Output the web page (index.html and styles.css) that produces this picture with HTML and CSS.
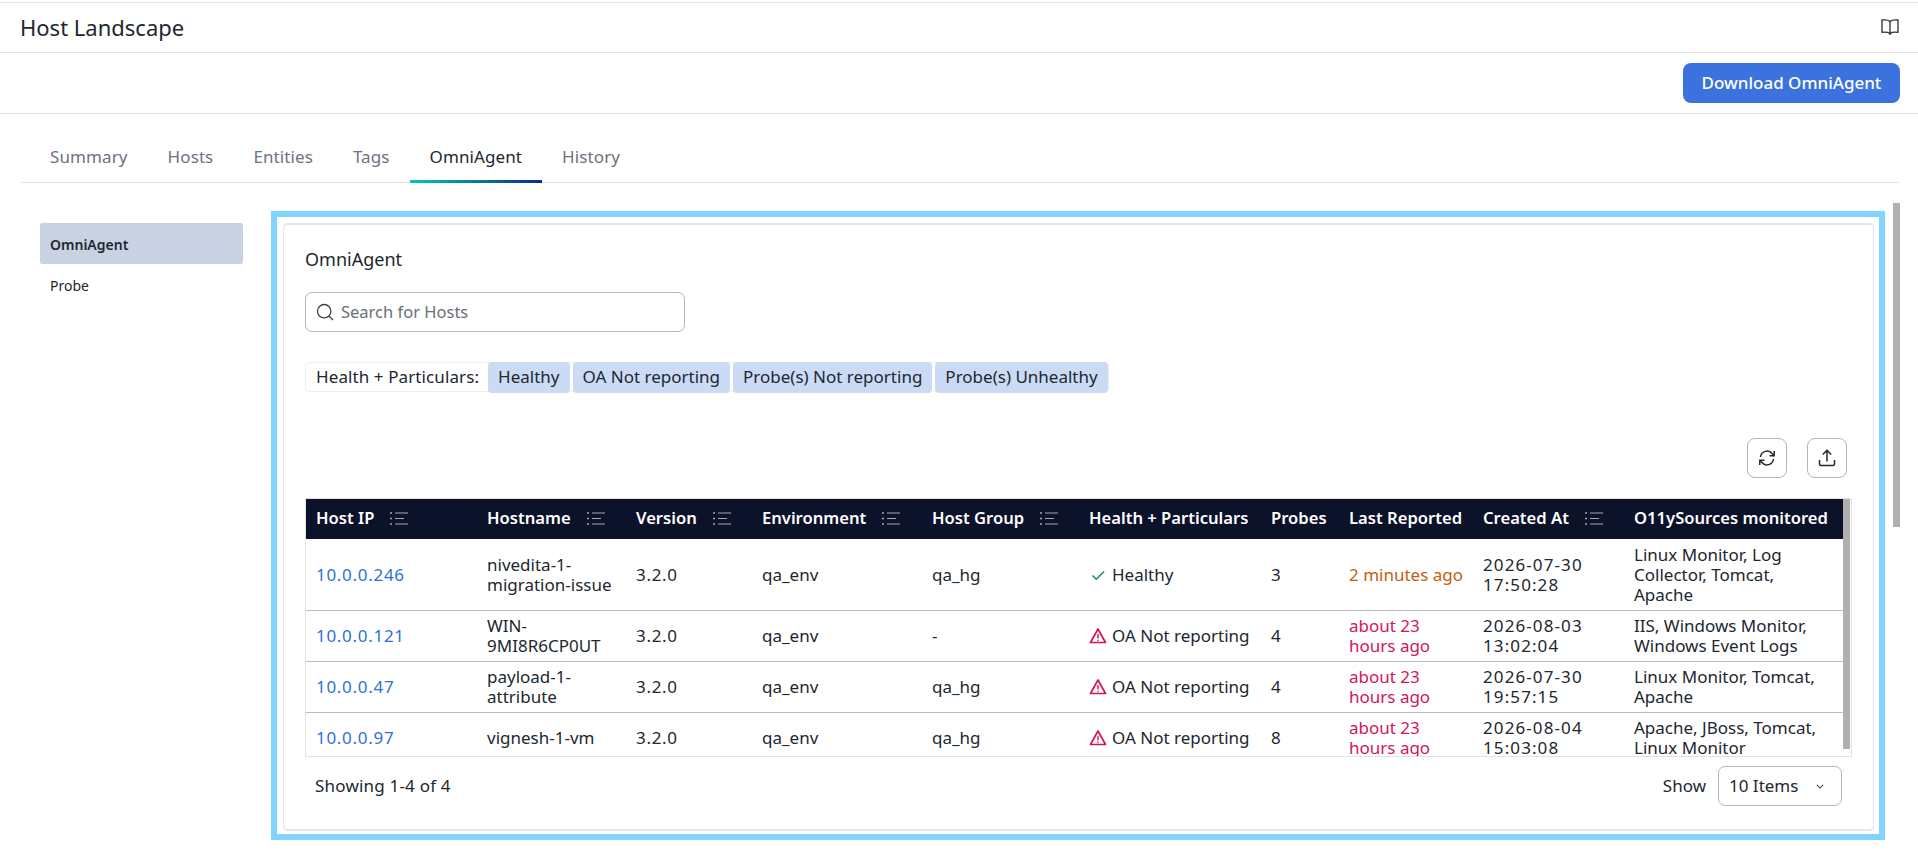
FILE: index.html
```html
<!DOCTYPE html>
<html lang="en">
<head>
    <meta charset="UTF-8">
    <title>Host Landscape</title>
    <link rel="stylesheet" href="styles.css">
</head>
<body>
    <svg class="sprite" width="0" height="0">
        <symbol id="sort" viewBox="0 0 18 13">
            <path d="M0 1h2M0 6.500h2M0 12h2" stroke="currentColor" stroke-width="1.400"/>
            <path d="M5 1h13M5 6.500h9M5 12h13" stroke="currentColor" stroke-width="1.200"/>
        </symbol>
        <symbol id="warn" viewBox="0 0 18 18">
            <path d="M9 2 16.500 15.500h-15z" fill="none" stroke="currentColor" stroke-width="1.700" stroke-linejoin="round"/>
            <path d="M9 7v4.500M9 12.700v1.300" stroke="currentColor" stroke-width="1.400"/>
        </symbol>
    </svg>

    <header class="page-header">
        <h1>Host Landscape</h1>
        <svg class="book-icon" viewBox="0 0 18 18" width="18" height="18" fill="none" stroke="#2b2f36" stroke-width="1.300" stroke-linejoin="round">
            <path d="M9 3.500C7.500 2 4 1.700 1 2v12.300c3-.3 6.500 0 8 1.200 1.500-1.200 5-1.500 8-1.200V2c-3-.3-6.500 0-8 1.500z"/>
            <path d="M9 3.500v13.500"/>
        </svg>
    </header>

    <div class="action-bar">
        <button class="btn-primary">Download OmniAgent</button>
    </div>

    <nav class="tabs">
        <a class="tab">Summary</a>
        <a class="tab">Hosts</a>
        <a class="tab">Entities</a>
        <a class="tab">Tags</a>
        <a class="tab active">OmniAgent</a>
        <a class="tab">History</a>
    </nav>

    <main class="content">
        <aside class="side-nav">
            <a class="side-item selected">OmniAgent</a>
            <a class="side-item">Probe</a>
        </aside>

        <section class="highlight">
            <div class="card">
                <h2 class="card-title">OmniAgent</h2>

                <div class="search">
                    <svg viewBox="0 0 18 18" width="18" height="18" fill="none" stroke="#3c4149" stroke-width="1.300">
                        <circle cx="8.200" cy="8.200" r="6.700"/>
                        <path d="M13 13l4 4"/>
                    </svg>
                    <span>Search for Hosts</span>
                </div>

                <div class="filters">
                    <span class="filter-label">Health + Particulars:</span>
                    <span class="chip">Healthy</span>
                    <span class="chip">OA Not reporting</span>
                    <span class="chip">Probe(s) Not reporting</span>
                    <span class="chip">Probe(s) Unhealthy</span>
                </div>

                <div class="toolbar">
                    <button class="icon-btn">
                        <svg viewBox="0 0 18 18" width="18" height="18" fill="none" stroke="#23272e" stroke-width="1.500">
                            <path d="M2.500 8A6.600 6.600 0 0 1 14.300 4.700L16 6.500"/>
                            <path d="M16.200 2v4.700h-4.700"/>
                            <path d="M15.500 10A6.600 6.600 0 0 1 3.700 13.300L2 11.500"/>
                            <path d="M1.800 16v-4.700h4.700"/>
                        </svg>
                    </button>
                    <button class="icon-btn">
                        <svg viewBox="0 0 18 18" width="18" height="18" fill="none" stroke="#23272e" stroke-width="1.500">
                            <path d="M9 12.500V1.500M4.800 5.500 9 1.300l4.200 4.200"/>
                            <path d="M1.500 11v4a1.500 1.500 0 0 0 1.500 1.500h12a1.500 1.500 0 0 0 1.500-1.500v-4"/>
                        </svg>
                    </button>
                </div>

                <div class="table-wrap">
                    <table class="hosts">
                        <colgroup>
                            <col class="c-ip"><col class="c-name"><col class="c-ver"><col class="c-env"><col class="c-group">
                            <col class="c-health"><col class="c-probes"><col class="c-last"><col class="c-created"><col class="c-src">
                        </colgroup>
                        <thead>
                            <tr>
                                <th><div class="th-in"><span>Host IP</span><svg class="sort"><use href="#sort"/></svg></div></th>
                                <th><div class="th-in"><span>Hostname</span><svg class="sort"><use href="#sort"/></svg></div></th>
                                <th><div class="th-in"><span>Version</span><svg class="sort"><use href="#sort"/></svg></div></th>
                                <th><div class="th-in"><span>Environment</span><svg class="sort"><use href="#sort"/></svg></div></th>
                                <th><div class="th-in"><span>Host Group</span><svg class="sort"><use href="#sort"/></svg></div></th>
                                <th>Health + Particulars</th>
                                <th>Probes</th>
                                <th>Last Reported</th>
                                <th><div class="th-in"><span>Created At</span><svg class="sort"><use href="#sort"/></svg></div></th>
                                <th>O11ySources monitored</th>
                            </tr>
                        </thead>
                        <tbody>
                            <tr>
                                <td class="num"><a class="ip">10.0.0.246</a></td>
                                <td>nivedita-1-<br>migration-issue</td>
                                <td class="num">3.2.0</td>
                                <td>qa_env</td>
                                <td>qa_hg</td>
                                <td><span class="health"><svg class="ok" viewBox="0 0 14 14" width="14" height="14" fill="none" stroke="currentColor" stroke-width="1.500"><path d="M1.500 7.500 5.300 11.300 13 3.500"/></svg>Healthy</span></td>
                                <td class="num">3</td>
                                <td class="recent">2 minutes ago</td>
                                <td class="stamp">2026-07-30<br>17:50:28</td>
                                <td>Linux Monitor, Log<br>Collector, Tomcat,<br>Apache</td>
                            </tr>
                            <tr>
                                <td class="num"><a class="ip">10.0.0.121</a></td>
                                <td>WIN-<br>9MI8R6CP0UT</td>
                                <td class="num">3.2.0</td>
                                <td>qa_env</td>
                                <td>-</td>
                                <td><span class="health"><svg class="bad"><use href="#warn"/></svg>OA Not reporting</span></td>
                                <td class="num">4</td>
                                <td class="stale">about 23<br>hours ago</td>
                                <td class="stamp">2026-08-03<br>13:02:04</td>
                                <td>IIS, Windows Monitor,<br>Windows Event Logs</td>
                            </tr>
                            <tr>
                                <td class="num"><a class="ip">10.0.0.47</a></td>
                                <td>payload-1-<br>attribute</td>
                                <td class="num">3.2.0</td>
                                <td>qa_env</td>
                                <td>qa_hg</td>
                                <td><span class="health"><svg class="bad"><use href="#warn"/></svg>OA Not reporting</span></td>
                                <td class="num">4</td>
                                <td class="stale">about 23<br>hours ago</td>
                                <td class="stamp">2026-07-30<br>19:57:15</td>
                                <td>Linux Monitor, Tomcat,<br>Apache</td>
                            </tr>
                            <tr>
                                <td class="num"><a class="ip">10.0.0.97</a></td>
                                <td>vignesh-1-vm</td>
                                <td class="num">3.2.0</td>
                                <td>qa_env</td>
                                <td>qa_hg</td>
                                <td><span class="health"><svg class="bad"><use href="#warn"/></svg>OA Not reporting</span></td>
                                <td class="num">8</td>
                                <td class="stale">about 23<br>hours ago</td>
                                <td class="stamp">2026-08-04<br>15:03:08</td>
                                <td>Apache, JBoss, Tomcat,<br>Linux Monitor</td>
                            </tr>
                        </tbody>
                    </table>
                    <div class="table-scroll"></div>
                </div>

                <div class="table-footer">
                    <span class="showing">Showing 1-4 of 4</span>
                    <div class="page-size">
                        <span>Show</span>
                        <div class="select">
                            <span>10 Items</span>
                            <svg viewBox="0 0 10 6" width="8" height="5" fill="none" stroke="#3c4149" stroke-width="1.300"><path d="M1 1l4 4 4-4"/></svg>
                        </div>
                    </div>
                </div>
            </div>
        </section>

        <div class="page-scroll"></div>
    </main>
</body>
</html>
```

FILE: styles.css
```css
* {
    box-sizing: border-box;
}
body {
    margin: 0;
    height: 865px;
    overflow: hidden;
    background-color: #fff;
    color: #21272f;
    font-family: "Noto Sans", Arial, sans-serif;
    font-size: 17px;
    line-height: 20px;
}
.sprite {
    position: absolute;
}
.page-header {
    margin-top: 2px;
    height: 51px;
    border-top: 1px solid #e5e5e5;
    border-bottom: 1px solid #e5e5e5;
    display: flex;
    align-items: center;
    justify-content: space-between;
    padding: 0 19px 1px 20px;
}
h1 {
    margin: 0;
    font-size: 22px;
    font-weight: 400;
}
.action-bar {
    height: 61px;
    border-bottom: 1px solid #e5e5e5;
    display: flex;
    align-items: center;
    justify-content: flex-end;
    padding: 0 18px 1px 0;
}
.btn-primary {
    width: 217px;
    height: 40px;
    border: 0;
    border-radius: 8px;
    background-color: #3b72de;
    color: #fff;
    font: 500 17px "Noto Sans", Arial, sans-serif;
}
.tabs {
    margin: 0 18px 0 20px;
    height: 69px;
    border-bottom: 1px solid #e5e5e5;
    display: flex;
    align-items: flex-end;
    padding-left: 10px;
}
.tab {
    height: 44px;
    padding: 8px 20px 0;
    color: #6b7280;
    letter-spacing: .1px;
    margin-bottom: -1px;
    border-bottom: 3px solid transparent;
}
.tab.active {
    color: #21272f;
    border-image: linear-gradient(90deg, #00c9b7, #0a2a8c) 1;
}
.content {
    display: flex;
    align-items: flex-start;
    padding: 20px 18px 0 40px;
    margin-top: 8px;
    gap: 28px;
}
.side-nav {
    width: 203px;
    margin-top: 12px;
    flex: none;
}
.side-item {
    display: block;
    height: 41px;
    padding: 0 10px;
    line-height: 43px;
    font-size: 14px;
}
.selected {
    background-color: #c9d2e2;
    border-radius: 2px;
    font-weight: 600;
}
.highlight {
    flex: 1;
    height: 629px;
    border: 6px solid #80d4ff;
    padding: 6px 5px 3px 6px;
}
.page-scroll {
    flex: none;
    width: 7px;
    height: 324px;
    margin: -8px 0 0 -20px;
    background-color: #b0b0b0;
}
.card {
    height: 100%;
    border: 1px solid #e6e6e6;
    border-width: 2px 1px;
    border-radius: 5px;
    padding: 22px 21px 0;
}
.card-title {
    margin: 0;
    font-size: 18px;
    font-weight: 400;
    line-height: 24px;
}
.search {
    margin-top: 21px;
    width: 380px;
    height: 40px;
    border: 1px solid #b5b5b5;
    border-radius: 7px;
    display: flex;
    align-items: center;
    gap: 7px;
    padding: 0 10px;
    color: #6b6f76;
    font-size: 16.500px;
}
.filters {
    margin-top: 30px;
    width: fit-content;
    height: 30px;
    border: 1px solid #eee;
    border-radius: 4px;
    display: flex;
    align-items: center;
    gap: 3px;
    padding-left: 10px;
}
.filter-label {
    margin-right: 6px;
    letter-spacing: .1px;
}
.chip {
    height: 31px;
    line-height: 30px;
    padding: 0 10px;
    background-color: #ccdbf5;
    border-radius: 4px;
}
.toolbar {
    margin-top: 46px;
    display: flex;
    justify-content: flex-end;
    gap: 20px;
    padding-right: 5px;
}
.icon-btn {
    width: 40px;
    height: 40px;
    padding: 0;
    background-color: #fff;
    border: 1px solid #b5b5b5;
    border-radius: 8px;
    display: flex;
    align-items: center;
    justify-content: center;
}
.table-wrap {
    margin-top: 20px;
    height: 259px;
    border: 1px solid #e2e2e2;
    display: flex;
    overflow: hidden;
}
.hosts {
    width: 1537px;
    flex: none;
    table-layout: fixed;
    border-collapse: collapse;
}
.c-ip { width: 171px; }
.c-name { width: 149px; }
.c-ver { width: 126px; }
.c-env { width: 170px; }
.c-group { width: 157px; }
.c-health { width: 182px; }
.c-probes { width: 78px; }
.c-last { width: 134px; }
.c-created { width: 151px; }
.c-src { width: 219px; }
.hosts th {
    height: 40px;
    padding: 0 10px 2px;
    background-color: #0b1229;
    color: #fff;
    text-align: left;
    font-weight: 600;
    white-space: nowrap;
    font-size: 16.600px;
}
.th-in {
    display: flex;
    align-items: center;
    gap: 16px;
}
.sort {
    width: 18px;
    height: 13px;
    color: #a3a7b0;
}
.hosts td {
    padding: 5px 10px;
    border-bottom: 1px solid #bdbdbd;
    vertical-align: middle;
}
.hosts tbody tr:first-child td {
    padding: 5.500px 10px;
}
.num {
    letter-spacing: .7px;
}
.stamp {
    letter-spacing: 1.100px;
}
.ip {
    color: #2f6fdb;
}
.health {
    display: flex;
    align-items: center;
    gap: 5px;
}
.ok {
    color: #1f8a5f;
    margin: 0 2px;
}
.bad {
    width: 18px;
    height: 18px;
    color: #d4145a;
}
.recent {
    color: #c2610f;
}
.stale {
    color: #d4145a;
}
.table-scroll {
    flex: none;
    width: 7px;
    height: 250px;
    background-color: #b0b0b0;
}
.table-footer {
    margin-top: 9px;
    display: flex;
    align-items: center;
    justify-content: space-between;
    padding: 0 10px;
}
.showing {
    letter-spacing: .2px;
}
.page-size {
    display: flex;
    align-items: center;
    gap: 12px;
}
.select {
    width: 124px;
    height: 40px;
    border: 1px solid #b5b5b5;
    border-radius: 7px;
    display: flex;
    align-items: center;
    justify-content: space-between;
    padding: 0 17px 0 10px;
}
```
